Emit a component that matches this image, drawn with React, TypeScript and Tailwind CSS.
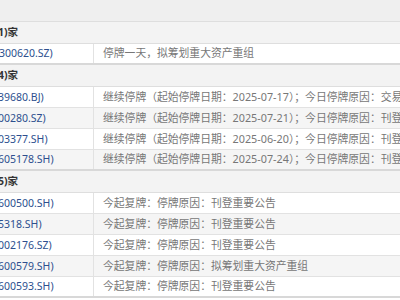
import React from 'react';

type Row = { code: string; shift: string; text: string };
type Group = { title: string; rows: Row[] };

const groups: Group[] = [
  {
    title: '1)家',
    rows: [{ code: '300620.SZ)', shift: '-ml-[1px]', text: '停牌一天，拟筹划重大资产重组' }],
  },
  {
    title: '4)家',
    rows: [
      { code: '39680.BJ)', shift: '-ml-[2px]', text: '继续停牌（起始停牌日期：2025-07-17）；今日停牌原因：交易异常波动' },
      { code: '00280.SZ)', shift: '-ml-[2px]', text: '继续停牌（起始停牌日期：2025-07-21）；今日停牌原因：刊登重要公告' },
      { code: '03377.SH)', shift: '-ml-[2px]', text: '继续停牌（起始停牌日期：2025-06-20）；今日停牌原因：刊登重要公告' },
      { code: '605178.SH)', shift: '-ml-[2px]', text: '继续停牌（起始停牌日期：2025-07-24）；今日停牌原因：刊登重要公告' },
    ],
  },
  {
    title: '5)家',
    rows: [
      { code: '600500.SH)', shift: '-ml-[2px]', text: '今起复牌：停牌原因：刊登重要公告' },
      { code: '5318.SH)', shift: '-ml-[2px]', text: '今起复牌：停牌原因：刊登重要公告' },
      { code: '002176.SZ)', shift: '-ml-[2px]', text: '今起复牌：停牌原因：刊登重要公告' },
      { code: '600579.SH)', shift: '-ml-[2px]', text: '今起复牌：停牌原因：拟筹划重大资产重组' },
      { code: '600593.SH)', shift: '-ml-[2px]', text: '今起复牌：停牌原因：刊登重要公告' },
    ],
  },
];

export default function App() {
  return (
    <div
      className="w-[400px] h-[300px] overflow-hidden bg-white text-[10.5px] leading-none"
      style={{ fontFamily: '"Noto Sans", "Noto Sans CJK SC", sans-serif' }}
    >
      <div className="h-[22px] bg-[#efefef] border-b border-[#dedede]" />
      {groups.map((g) => (
        <div key={g.title}>
          <div className="h-[22px] flex items-center bg-[#f3f3f3] border-b border-[#dedede] overflow-hidden">
            <span className="-ml-[2px] font-bold text-[#333] whitespace-nowrap">{g.title}</span>
          </div>
          {g.rows.map((r, i) => (
            <div
              key={r.code}
              className={`h-[21px] flex border-b border-[#e2e2e2] ${i % 2 === 1 ? 'bg-[#f5f5f5]' : 'bg-white'} ${i === g.rows.length - 1 ? 'border-b-2 border-b-[#d8d8d8]' : ''}`}
            >
              <div className="w-[94px] shrink-0 flex items-center overflow-hidden border-r border-[#e2e2e2]">
                <span className={`${r.shift} text-[#2d4f8e] whitespace-nowrap`}>{r.code}</span>
              </div>
              <div className="flex-1 flex items-center pl-[9px] overflow-hidden">
                <span className="text-[10.8px] text-[#777] whitespace-nowrap">{r.text}</span>
              </div>
            </div>
          ))}
        </div>
      ))}
    </div>
  );
}
